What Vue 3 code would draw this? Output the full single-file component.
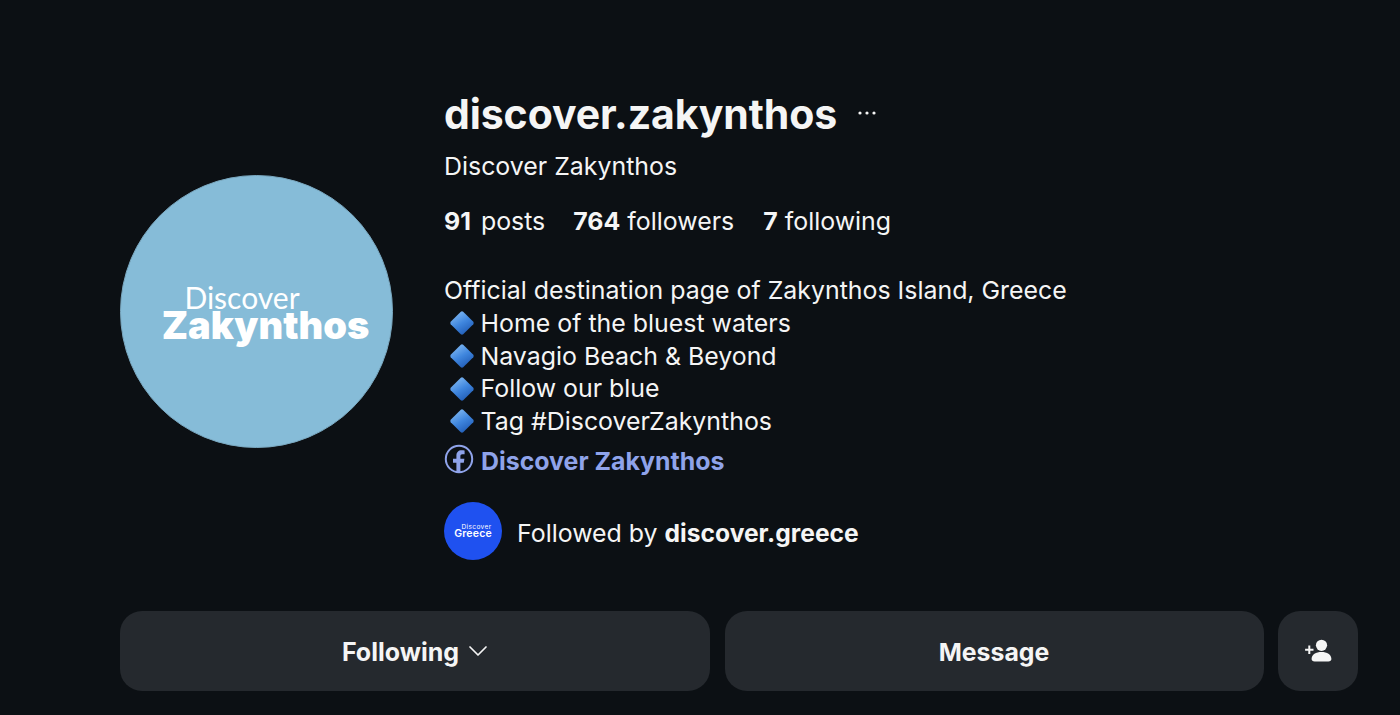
<template>
  <div class="page">
    <section class="header">
      <div class="avatar">
        <span class="logo-light">Discover</span>
        <span class="logo-bold">Zakynthos</span>
      </div>
      <div class="info">
        <div class="title-row">
          <h1 class="username">discover.zakynthos</h1>
          <svg class="more" width="20" height="4" viewBox="0 0 20 4">
            <circle cx="3" cy="2" r="1.6" />
            <circle cx="10" cy="2" r="1.6" />
            <circle cx="17" cy="2" r="1.6" />
          </svg>
        </div>
        <div class="full-name">Discover Zakynthos</div>
        <div class="stats">
          <span v-for="stat in stats" :key="stat.label"><b>{{ stat.value }}</b> {{ stat.label }}</span>
        </div>
        <div class="bio">
          <div>Official destination page of Zakynthos Island, Greece</div>
          <div v-for="line in bioLines" :key="line" class="bio-line">
            <svg class="diamond" width="26" height="26" viewBox="0 0 26 26">
              <defs>
                <linearGradient id="diamondFill" x1="0.2" y1="0" x2="0.8" y2="1">
                  <stop offset="0" stop-color="#86bdf4" />
                  <stop offset="0.5" stop-color="#3f86de" />
                  <stop offset="1" stop-color="#1c56b0" />
                </linearGradient>
              </defs>
              <path d="M11.800 1.700Q13 .8 14.200 1.700L24.300 11.800Q25.200 13 24.300 14.200L14.200 24.300Q13 25.200 11.800 24.300L1.700 14.200Q.8 13 1.700 11.800Z" fill="url(#diamondFill)" />
            </svg>
            <span>{{ line }}</span>
          </div>
        </div>
        <div class="link-row">
          <svg class="fb" width="30" height="30" viewBox="0 0 30 30" fill="none">
            <circle cx="15" cy="15" r="13.200" stroke="#8fa3ea" stroke-width="2" />
            <path d="M12.400 28.200V18.800H9v-4.100h3.400v-3.100c0-3.400 2.100-5.300 5.100-5.300 1.500 0 2.800.2 3.100.3v3.600h-2.100c-1.700 0-2.100.8-2.100 2v2.500h4l-.6 4.100h-3.400v9.400Z" fill="#8fa3ea" />
          </svg>
          <span class="link-text">Discover Zakynthos</span>
        </div>
        <div class="followed">
          <div class="mini-avatar">
            <span class="mini-light">Discover</span>
            <span class="mini-bold">Greece</span>
          </div>
          <span class="followed-text">Followed by <b>discover.greece</b></span>
        </div>
      </div>
    </section>
    <section class="actions">
      <button class="btn btn-following">
        <span class="btn-label">Following</span>
        <svg width="20" height="12" viewBox="0 0 20 12" fill="none">
          <path d="M2 2l8 8 8-8" stroke="#f5f5f5" stroke-width="1.7" stroke-linecap="round" stroke-linejoin="round" />
        </svg>
      </button>
      <button class="btn btn-message"><span class="btn-label">Message</span></button>
      <button class="btn btn-add">
        <svg width="28" height="24" viewBox="0 0 28 24" fill="#f5f5f5">
          <circle cx="17.500" cy="6.300" r="5.600" />
          <path d="M7.600 20c0-4.600 4.400-7 9.900-7s9.900 2.400 9.900 7c0 1.600-1.200 2.500-3 2.500H10.600c-1.800 0-3-.9-3-2.500Z" />
          <path d="M4.300 6.500h2v3.200h3.200v2H6.300v3.200h-2v-3.200H1.100v-2h3.200Z" />
        </svg>
      </button>
    </section>
  </div>
</template>

<script setup>
const stats = [
  { value: '91', label: 'posts' },
  { value: '764', label: 'followers' },
  { value: '7', label: 'following' }
];

const bioLines = [
  'Home of the bluest waters',
  'Navagio Beach & Beyond',
  'Follow our blue',
  'Tag #DiscoverZakynthos'
];
</script>

<style>
html,
body {
  background: #0c1014;
}
</style>

<style scoped>
.page {
  box-sizing: border-box;
  height: 715px;
  padding: 88px 42px 24px 120px;
  background: #0c1014;
  color: #f5f5f5;
  font-family: Inter, "Liberation Sans", sans-serif;
  font-size: 24.9px;
  overflow: hidden;
}

.header {
  display: flex;
  align-items: flex-start;
  gap: 51px;
}

.avatar {
  flex: none;
  box-sizing: border-box;
  width: 273px;
  height: 273px;
  margin-top: 87px;
  border-radius: 50%;
  border: 1px solid #7aa8c0;
  background: #86bcd8;
  display: flex;
  flex-direction: column;
  align-items: center;
  justify-content: center;
  color: #fff;
}

.logo-light {
  font-family: Lato, sans-serif;
  font-size: 30px;
  line-height: 28px;
  margin-right: 29px;
  margin-top: -2px;
}

.logo-bold {
  font-weight: 900;
  font-size: 38px;
  line-height: 28px;
  margin-left: 18px;
}

.title-row {
  display: flex;
  align-items: center;
  gap: 20px;
}

.username {
  margin: 0;
  font-size: 41px;
  line-height: 52px;
  font-weight: 700;
  letter-spacing: -0.1px;
}

.more {
  fill: #f5f5f5;
  margin-bottom: 3px;
}

.full-name {
  margin-top: 10px;
  line-height: 32px;
}

.stats {
  display: flex;
  gap: 28px;
  margin-top: 23px;
  line-height: 32px;
}

.stats b {
  font-weight: 700;
}

.stats span:first-child b {
  margin-right: 3px;
}

.stats span:last-child {
  margin-left: 1px;
}

.bio {
  margin-top: 37px;
  line-height: 32.75px;
}

.bio-line {
  display: flex;
  align-items: center;
  gap: 5.5px;
}

.diamond {
  flex: none;
  margin-left: 5px;
}

.link-row {
  display: flex;
  align-items: center;
  gap: 7px;
  margin-top: 6px;
  line-height: 34px;
}

.fb {
  flex: none;
  margin-top: -4px;
}

.link-text {
  color: #8fa3ea;
  font-weight: 700;
}

.followed {
  display: flex;
  align-items: center;
  gap: 15px;
  margin-top: 24px;
}

.followed-text {
  padding-top: 4px;
}

.followed b {
  font-weight: 700;
  font-size: 24.6px;
}

.mini-avatar {
  flex: none;
  width: 58px;
  height: 58px;
  border-radius: 50%;
  background: #1f51f0;
  display: flex;
  flex-direction: column;
  align-items: center;
  justify-content: center;
  color: #fff;
}

.mini-light {
  font-size: 6.5px;
  line-height: 6px;
  letter-spacing: 0.4px;
  margin-left: 7px;
}

.mini-bold {
  font-size: 10.5px;
  line-height: 7px;
  font-weight: 600;
  letter-spacing: 0.2px;
}

.actions {
  display: flex;
  gap: 14.5px;
  margin-top: 51px;
}

.btn {
  height: 80px;
  border: none;
  border-radius: 22px;
  background: #25292e;
  color: #f5f5f5;
  font: 700 25px Inter, "Liberation Sans", sans-serif;
  display: flex;
  align-items: center;
  justify-content: center;
  gap: 9px;
  padding: 0;
}

.btn-label {
  padding-top: 2px;
}

.btn-following {
  width: 590px;
}

.btn-message {
  width: 539px;
  font-size: 24.8px;
}

.btn-add {
  width: 80px;
}
</style>
